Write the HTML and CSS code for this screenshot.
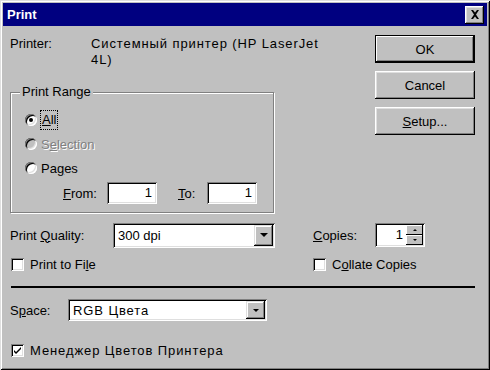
FILE: index.html
```html
<!DOCTYPE html>
<html lang="en">
<head>
    <meta charset="UTF-8">
    <title>Print</title>
    <link rel="stylesheet" href="styles.css">
</head>
<body>
    <div class="dialog">
        <div class="titlebar">
            <span class="title">Print</span>
            <span class="close-btn">
                <svg width="10" height="9" viewBox="0 0 10 9"><path d="M1 0h2l2 2.5L7 0h2L6 4.5 9 9H7L5 6.5 3 9H1l3-4.5z" fill="#000"/></svg>
            </span>
        </div>

        <div class="content">
            <div class="top">
                <div class="left">
                    <div class="printer-row">
                        <span class="printer-label">Printer:</span>
                        <span class="printer-name ru">Системный принтер (HP LaserJet 4L)</span>
                    </div>

                    <fieldset class="range">
                        <legend>Print Range</legend>
                        <div class="radio-row">
                            <span class="radio checked"></span>
                            <span class="focus-text"><u>A</u>ll</span>
                        </div>
                        <div class="radio-row disabled">
                            <span class="radio"></span>
                            <span>S<u>e</u>lection</span>
                        </div>
                        <div class="radio-row">
                            <span class="radio"></span>
                            <span>Pa<u>g</u>es</span>
                        </div>
                        <div class="from-row">
                            <span class="from-label"><u>F</u>rom:</span>
                            <span class="field page-field">1</span>
                            <span class="to-label"><u>T</u>o:</span>
                            <span class="field page-field">1</span>
                        </div>
                    </fieldset>
                </div>

                <div class="buttons">
                    <div class="btn default"><span>OK</span></div>
                    <div class="btn"><span>Cancel</span></div>
                    <div class="btn"><span><u>S</u>etup...</span></div>
                </div>
            </div>

            <div class="row quality-row">
                <span class="quality-label">Print <u>Q</u>uality:</span>
                <div class="field combo quality-combo">
                    <span class="combo-text">300 dpi</span>
                    <span class="drop-btn"><span class="arrow"></span></span>
                </div>
                <span class="copies-label"><u>C</u>opies:</span>
                <div class="field spinner">
                    <span class="spin-text">1</span>
                    <span class="spin-btns">
                        <span class="spin-btn"><span class="tiny-up"></span></span>
                        <span class="spin-btn"><span class="tiny-down"></span></span>
                    </span>
                </div>
            </div>

            <div class="row check-row">
                <div class="check-item file-item">
                    <span class="checkbox"></span>
                    <span class="check-text">Print to Fi<u>l</u>e</span>
                </div>
                <div class="check-item">
                    <span class="checkbox"></span>
                    <span class="check-text">C<u>o</u>llate Copies</span>
                </div>
            </div>

            <div class="separator"></div>

            <div class="row space-row">
                <span class="space-label">S<u>p</u>ace:</span>
                <div class="field combo space-combo">
                    <span class="combo-text ru">RGB Цвета</span>
                    <span class="drop-btn small"><span class="arrow"></span></span>
                </div>
            </div>

            <div class="row check-row cm-row">
                <div class="check-item">
                    <span class="checkbox">
                        <svg width="9" height="9" viewBox="0 0 9 9"><path d="M1 4l2 2 5-5v2L3 8 1 6z" fill="#000"/></svg>
                    </span>
                    <span class="check-text ru">Менеджер Цветов Принтера</span>
                </div>
            </div>
        </div>
    </div>
</body>
</html>
```

FILE: styles.css
```css
* { margin: 0; padding: 0; box-sizing: border-box; }
body { width: 490px; height: 370px; background: #c0c0c0; font-family: "Liberation Sans", Arial, sans-serif; font-size: 13px; color: #000; overflow: hidden; }
u { text-decoration: underline; text-underline-offset: 1px; }
.ru { letter-spacing: 0.9px; }

.dialog { width: 490px; height: 370px; background: #c0c0c0; padding: 3px; box-shadow: inset 1px 1px #dfdfdf, inset -1px -1px #000, inset 2px 2px #fff, inset -2px -2px #808080; }

.titlebar { height: 23px; background: #000080; display: flex; align-items: center; justify-content: space-between; padding: 0 3px 0 4px; }
.title { color: #fff; font-weight: bold; font-size: 13px; }
.close-btn { width: 19px; height: 18px; background: #c0c0c0; display: flex; align-items: center; justify-content: center; box-shadow: inset -1px -1px #000, inset 1px 1px #fff, inset -2px -2px #808080, inset 2px 2px #dfdfdf; }

.content { padding: 0 12px 0 7px; }

.top { display: flex; }
.left { flex: 1; }
.printer-row { display: flex; margin-top: 10px; line-height: 16px; }
.printer-label { width: 81px; flex: none; }
.printer-name { width: 232px; }

.range { width: 264px; margin-top: 16px; border: 1px solid #808080; box-shadow: 1px 1px #fff, inset 1px 1px #fff; padding: 8px 0 7px 14px; height: 129px; }
.range legend { margin-left: -5px; padding: 0 2px; background: #c0c0c0; line-height: 16px; }

.radio-row { display: flex; align-items: center; height: 24px; }
.radio { width: 12px; height: 12px; border-radius: 50%; background: #fff; margin-right: 3px; position: relative; box-shadow: inset 1px 1px #808080, inset -1px -1px #fff, inset 2px 2px #000, inset -2px -2px #dfdfdf; }
.radio.checked::after { content: ""; position: absolute; left: 4px; top: 4px; width: 4px; height: 4px; border-radius: 50%; background: #000; }
.radio-row.disabled { color: #808080; text-shadow: 1px 1px #fff; }
.radio-row.disabled .radio { background: #c0c0c0; }
.radio-row span:last-child { margin-left: 1px; }
.focus-text { outline: 1px dotted #000; padding: 0 1px; line-height: 18px; }

.from-row { display: flex; align-items: center; margin-top: 2px; height: 22px; }
.from-label { margin-left: 38px; width: 44px; }
.to-label { margin-left: 21px; width: 29px; }

.field { background: #fff; box-shadow: inset 1px 1px #808080, inset -1px -1px #fff, inset 2px 2px #000, inset -2px -2px #dfdfdf; }
.page-field { width: 50px; height: 22px; text-align: right; padding: 0 5px; line-height: 22px; }

.buttons { width: 100px; flex: none; margin-top: 9px; display: flex; flex-direction: column; gap: 8px; }
.btn { height: 28px; display: flex; align-items: center; justify-content: center; box-shadow: inset -1px -1px #000, inset 1px 1px #fff, inset -2px -2px #808080, inset 2px 2px #dfdfdf; }
.btn.default { border: 1px solid #000; box-shadow: inset -1px -1px #000, inset 1px 1px #fff, inset -2px -2px #808080; }

.row { display: flex; align-items: center; }
.quality-row { margin-top: 10px; height: 24px; }
.quality-label { width: 103px; }
.combo { display: flex; align-items: center; padding: 2px; }
.combo-text { flex: 1; padding-left: 3px; }
.quality-combo { width: 162px; height: 25px; }
.drop-btn { width: 19px; height: 21px; background: #c0c0c0; display: flex; align-items: center; justify-content: center; box-shadow: inset -1px -1px #000, inset 1px 1px #dfdfdf, inset -2px -2px #808080, inset 2px 2px #fff; }
.drop-btn.small { height: 18px; }
.arrow { width: 0; height: 0; border-left: 4px solid transparent; border-right: 4px solid transparent; border-top: 4px solid #000; }
.small .arrow { border-left-width: 3px; border-right-width: 3px; border-top-width: 3px; }

.copies-label { margin-left: 38px; width: 62px; }
.spinner { width: 50px; height: 24px; display: flex; padding: 2px; }
.spin-text { flex: 1; text-align: right; padding-right: 3px; line-height: 20px; }
.spin-btns { width: 17px; display: flex; flex-direction: column; }
.spin-btn { flex: 1; background: #c0c0c0; display: flex; align-items: center; justify-content: center; box-shadow: inset -1px -1px #000, inset 1px 1px #fff; }
.tiny-up { border-left: 2px solid transparent; border-right: 2px solid transparent; border-bottom: 2px solid #000; }
.tiny-down { border-left: 2px solid transparent; border-right: 2px solid transparent; border-top: 2px solid #000; }

.check-row { margin-top: 11px; height: 13px; }
.check-item { display: flex; align-items: center; }
.file-item { width: 303px; padding-left: 1px; }
.checkbox { width: 13px; height: 13px; flex: none; background: #fff; display: flex; align-items: center; justify-content: center; box-shadow: inset 1px 1px #808080, inset -1px -1px #fff, inset 2px 2px #000, inset -2px -2px #dfdfdf; }
.check-text { margin-left: 6px; }

.separator { margin: 15px 0 0 1px; height: 2px; background: #000; }

.space-row { margin-top: 11px; height: 22px; }
.space-label { width: 58px; }
.space-combo { width: 199px; height: 22px; }

.cm-row { margin-top: 23px; padding-left: 1px; }
```
